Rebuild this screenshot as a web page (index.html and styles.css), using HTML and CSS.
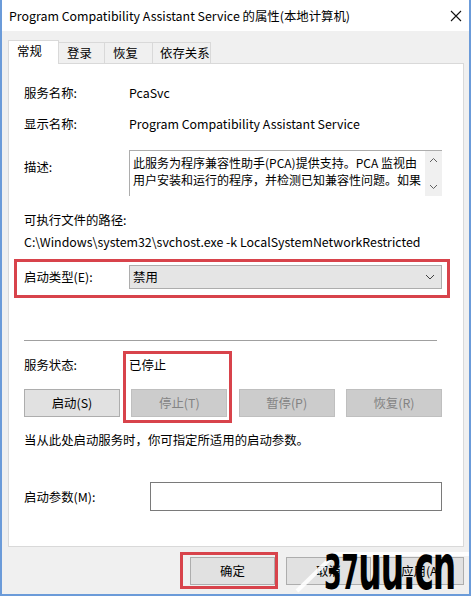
FILE: index.html
```html
<!DOCTYPE html>
<html lang="zh-CN">
<head>
    <meta charset="UTF-8">
    <title>Program Compatibility Assistant Service 的属性(本地计算机)</title>
    <link rel="stylesheet" href="styles.css">
</head>
<body>

<div class="window">
    <div class="titlebar">
        <span class="title">Program Compatibility Assistant Service 的属性(本地计算机)</span>
        <svg class="close" width="12" height="12" viewBox="0 0 12 12">
            <path d="M1 1L11 11M11 1L1 11" stroke="#111" stroke-width="1.1" fill="none"/>
        </svg>
    </div>

    <div class="client">
        <ul class="tabs">
            <li class="tab active">常规</li>
            <li class="tab">登录</li>
            <li class="tab">恢复</li>
            <li class="tab tab-wide">依存关系</li>
        </ul>

        <div class="panel">
            <div class="row first">
                <span class="label">服务名称:</span>
                <span>PcaSvc</span>
            </div>
            <div class="row second">
                <span class="label">显示名称:</span>
                <span>Program Compatibility Assistant Service</span>
            </div>
            <div class="row desc-row">
                <span class="label desc-label">描述:</span>
                <div class="desc-box">
                    <div class="desc-text">此服务为程序兼容性助手(PCA)提供支持。PCA 监视由用户安装和运行的程序，并检测已知兼容性问题。如果</div>
                    <div class="scrollbar">
                        <svg width="9" height="6" viewBox="0 0 9 6"><path d="M1 5L4.5 1.5L8 5" stroke="#606060" fill="none"/></svg>
                        <svg width="9" height="6" viewBox="0 0 9 6"><path d="M1 1L4.5 4.5L8 1" stroke="#606060" fill="none"/></svg>
                    </div>
                </div>
            </div>
            <div class="path-label">可执行文件的路径:</div>
            <div class="path">C:\Windows\system32\svchost.exe -k LocalSystemNetworkRestricted</div>

            <div class="row type-row">
                <span class="label">启动类型(E):</span>
                <div class="select">
                    <span>禁用</span>
                    <svg width="10" height="6" viewBox="0 0 10 6"><path d="M1 1L5 5L9 1" stroke="#404040" fill="none"/></svg>
                </div>
                <div class="mark mark-type"></div>
            </div>

            <hr class="sep">

            <div class="status-block">
                <div class="row status-row">
                    <span class="label">服务状态:</span>
                    <span>已停止</span>
                </div>
                <div class="btn-row">
                    <button class="btn">启动(S)</button>
                    <button class="btn" disabled>停止(T)</button>
                    <button class="btn" disabled>暂停(P)</button>
                    <button class="btn" disabled>恢复(R)</button>
                </div>
                <div class="mark mark-status"></div>
            </div>

            <div class="hint">当从此处启动服务时，你可指定所适用的启动参数。</div>

            <div class="row param-row">
                <span class="label param-label">启动参数(M):</span>
                <div class="input"></div>
            </div>
        </div>

        <div class="footer">
            <div class="ok-wrap">
                <button class="btn dlg-btn">确定</button>
                <div class="mark mark-ok"></div>
            </div>
            <button class="btn dlg-btn">取消</button>
            <button class="btn dlg-btn">应用(A)</button>

            <!-- watermark on top of the buttons -->
            <svg class="roof" width="180" height="44" viewBox="0 0 180 44">
                <path d="M4 42L42 5L176 5" stroke="#fff" stroke-width="4" stroke-opacity="0.9" fill="none"/>
            </svg>
            <span class="watermark">37<span class="wm-lc">uu.cn</span></span>
        </div>
    </div>
</div>

</body>
</html>
```

FILE: styles.css
```css
/* Basic reset */
* {
    margin: 0;
    padding: 0;
    box-sizing: border-box;
}

body {
    font-family: "Noto Sans CJK SC", "Noto Sans", sans-serif;
    font-size: 12.4px;
    color: #000;
    background-color: #fff;
}

.window {
    width: 471px;
    height: 596px;
    display: flex;
    flex-direction: column;
    border: 2px solid #6b9bd9;
    border-top: none;
}

/* Title bar */
.titlebar {
    height: 31px;
    background-color: #fff;
    display: flex;
    align-items: center;
    justify-content: space-between;
    padding: 0 7px 0 7px;
}

.title {
    font-size: 12.4px;
    line-height: 18px;
}

/* Grey client area */
.client {
    flex: 1;
    background-color: #f0f0f0;
    padding: 9px 5px 0 6px;
    display: flex;
    flex-direction: column;
}

.tabs {
    list-style: none;
    display: flex;
    align-items: flex-end;
    height: 23px;
}

.tab {
    width: 46px;
    height: 21px;
    line-height: 20px;
    padding-left: 8px;
    border: 1px solid #d9d9d9;
    border-bottom: none;
    border-left: none;
    background-color: #f0f0f0;
    white-space: nowrap;
}

.tab.active {
    width: 51px;
    height: 24px;
    margin-bottom: -1px;
    border-left: 1px solid #d9d9d9;
    background-color: #fff;
    position: relative;
}

.tab:nth-child(3) {
    width: 48px;
}

.tab-wide {
    width: 58px;
    padding-left: 7px;
}

/* Tab page */
.panel {
    height: 484px;
    background-color: #fff;
    border: 1px solid #d9d9d9;
    padding: 20px 21px 0 15px;
}

.row {
    display: flex;
    align-items: center;
    line-height: 18px;
    position: relative;
}

.label {
    width: 105px;
    flex-shrink: 0;
}

.second {
    margin-top: 13px;
}

.desc-row {
    margin-top: 17px;
    align-items: flex-start;
}

.desc-label {
    padding-top: 8px;
}

.desc-box {
    flex: 1;
    height: 46px;
    display: flex;
    border-top: 1px solid #adadad;
    border-left: 1px solid #adadad;
}

.desc-text {
    flex: 1;
    height: 34px;
    margin: 3px 0 0 0;
    padding: 0 0 0 3px;
    font-size: 12px;
    line-height: 17px;
    overflow: hidden;
}

.scrollbar {
    width: 17px;
    background-color: #f0f0f0;
    display: flex;
    flex-direction: column;
    justify-content: space-between;
    align-items: center;
    padding: 6px 0 6px;
}

.path-label {
    margin-top: 15px;
    line-height: 18px;
}

.path {
    margin-top: 4px;
    line-height: 18px;
}

.type-row {
    margin-top: 14px;
}

.select {
    flex: 1;
    height: 24px;
    background-color: #e5e5e5;
    border: 1px solid #adadad;
    display: flex;
    align-items: center;
    justify-content: space-between;
    padding: 0 6px 0 3px;
}

.sep {
    border: none;
    border-top: 1px solid #a0a0a0;
    margin: 51px 5px 0 0;
}

.status-block {
    margin-top: 15px;
    position: relative;
}

.btn-row {
    display: flex;
    justify-content: space-between;
    margin-top: 15px;
}

.btn {
    font-family: inherit;
    font-size: 12.4px;
    width: 96px;
    height: 28px;
    background-color: #e1e1e1;
    border: 1px solid #adadad;
    color: #000;
}

.btn:disabled {
    background-color: #cccccc;
    border-color: #bfbfbf;
    color: #838383;
}

.hint {
    margin-top: 14px;
    line-height: 18px;
}

.param-row {
    margin-top: 33px;
}

.param-label {
    width: 126px;
}

.input {
    flex: 1;
    height: 29px;
    border: 1px solid #7a7a7a;
    background-color: #fff;
}

/* Dialog buttons */
.footer {
    flex: 1;
    display: flex;
    justify-content: flex-end;
    align-items: flex-start;
    padding: 10px 0 0 0;
    gap: 8px;
    position: relative;
}

.ok-wrap {
    position: relative;
    margin-right: 3px;
}

.dlg-btn {
    width: 85px;
}

/* Red annotation frames */
.mark {
    position: absolute;
    border: 3px solid #d8434b;
}

.mark-type {
    left: -10px;
    right: -8px;
    top: -6px;
    bottom: -9px;
}

.mark-status {
    left: 99px;
    width: 109px;
    top: -5px;
    bottom: -6px;
}

.mark-ok {
    left: -10px;
    right: -3px;
    top: -5px;
    bottom: -4px;
}

/* Watermark */
.roof {
    position: absolute;
    left: 285px;
    top: 2px;
}

.watermark {
    position: absolute;
    left: 316px;
    top: -7px;
    font-family: "DejaVu Sans", sans-serif;
    font-weight: bold;
    font-size: 48px;
    line-height: 56px;
    letter-spacing: -1px;
    color: #000;
    white-space: nowrap;
    transform: scaleX(0.53);
    transform-origin: left top;
}

.wm-lc {
    font-size: 62px;
    letter-spacing: -2px;
}
```
